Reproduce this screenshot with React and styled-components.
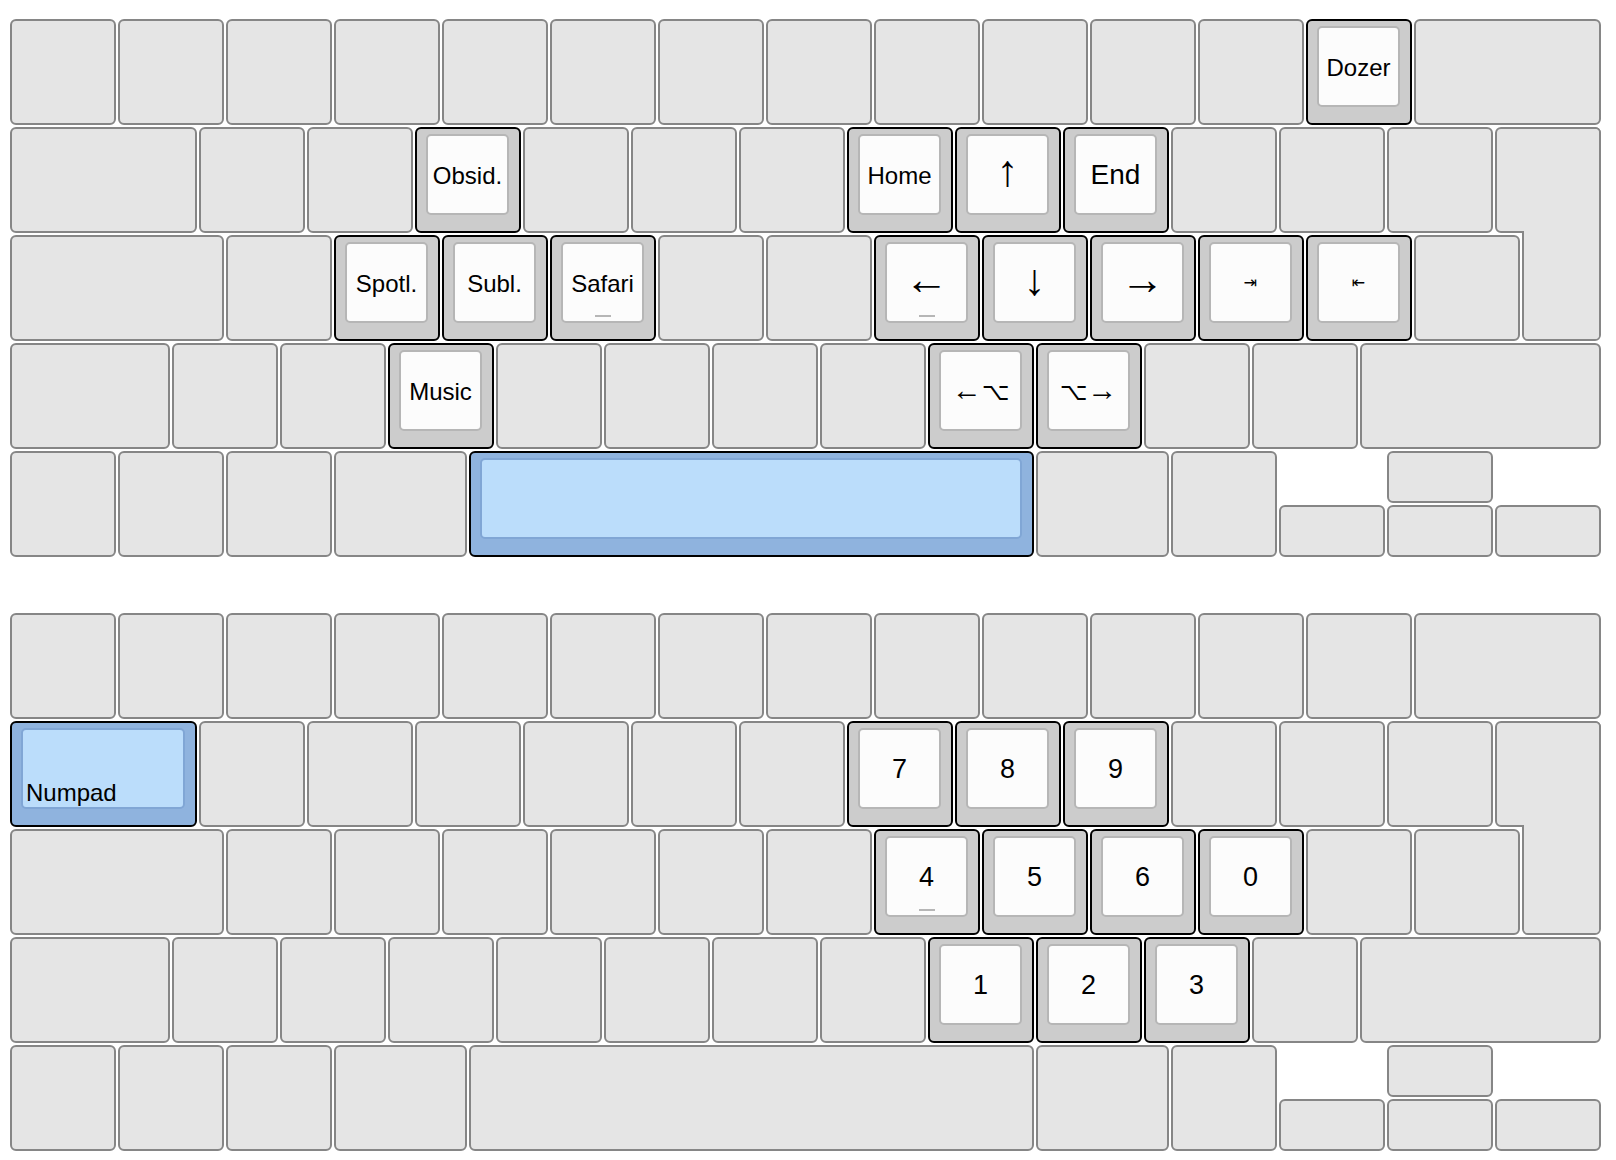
import React from 'react';
import styled, {createGlobalStyle, css} from 'styled-components';

const GlobalStyle = createGlobalStyle`
    html, body {
        margin: 0;
        padding: 0;
        background: #fff;
    }
    body {
        font-family: "Liberation Sans", Arial, "DejaVu Sans", sans-serif;
        color: #000;
    }
`

const Page = styled.div`
    display: flex;
    flex-direction: column;
    gap: 54px;
    padding: 18px 9px 0;
    width: max-content;
`

// 1u = 108px, grid in quarter units across, half units down
const Board = styled.div`
    display: grid;
    grid-template-columns: repeat(59, 27px);
    grid-template-rows: repeat(10, 54px);
`

const KeyCap = styled.div`
    grid-column: ${p => p.$x * 4 + 1} / span ${p => p.$w * 4};
    grid-row: ${p => p.$y * 2 + 1} / span ${p => p.$h * 2};
    margin: 1px;
    box-sizing: border-box;
    border: 2px solid #868686;
    border-radius: 6px;
    background: #e5e5e5;
    display: flex;
    ${p => p.$tone === 'hl' && css`
        border-color: #000;
        background: #cccccc;
        padding: 5px 10px 16px 9px;
    `}
    ${p => p.$tone === 'blue' && css`
        border-color: #000;
        background: #8fb3de;
        padding: 5px 10px 16px 9px;
    `}
`

const KeyTop = styled.div`
    flex: 1;
    display: grid;
    box-sizing: border-box;
    border: 2px solid #b6b6b6;
    border-radius: 5px;
    background: #fcfcfc;
    font-size: ${p => p.$size || 24}px;
    ${p => p.$blue && css`
        background: #bbddfb;
        border-color: #80a6d5;
    `}
`

const Label = styled.span`
    grid-area: 1 / 1;
    white-space: nowrap;
    line-height: 1.15;
    ${p => p.$corner ? css`
        align-self: end;
        justify-self: start;
        padding: 0 3px 0;
    ` : css`
        align-self: center;
        justify-self: center;
        margin-top: 2px;
    `}
    ${p => p.$symbol && css`
        font-family: "DejaVu Sans", sans-serif;
    `}
`

const Arrow = styled.span`
    font-size: ${p => p.$size || 44}px;
    line-height: 0;
    vertical-align: ${p => p.$lift || 0}px;
`

const Nub = styled.span`
    grid-area: 1 / 1;
    align-self: end;
    justify-self: center;
    width: 16px;
    height: 2px;
    margin-bottom: 4px;
    background: #b6b6b6;
`

const EnterWrap = styled.div`
    grid-column: 56 / span 4;
    grid-row: 3 / span 4;
    margin: 1px;
    display: grid;
    grid-template-columns: 27px 1fr;
    grid-template-rows: 106px 1fr;
`

const EnterPart = styled.div`
    grid-area: ${p => p.$area};
    box-sizing: border-box;
    border: 2px solid #868686;
    border-radius: 6px;
    background: #e5e5e5;
`

const EnterFill = styled.div`
    grid-area: 1 / 2 / 3 / 3;
    margin: 2px;
    background: #e5e5e5;
    border-radius: 0 4px 4px 4px;
`

function row(y, specs) {
    let x = 0;
    return specs.map(s => {
        const k = {x, y, w: 1, h: 1, ...s};
        x = k.x + k.w;
        return k;
    });
}

const ones = n => Array.from({length: n}, () => ({}));

const layout = [
    ...row(0, [...ones(13), {w: 1.75}]),
    ...row(1, [{w: 1.75}, ...ones(12)]),
    ...row(2, [{w: 2}, ...ones(12)]),
    ...row(3, [{w: 1.5}, ...ones(11), {w: 2.25}]),
    ...row(4, [{}, {}, {}, {w: 1.25}, {w: 5.25}, {w: 1.25}, {}]),
    {x: 12.75, y: 4, w: 1, h: 0.5},
    {x: 11.75, y: 4.5, w: 1, h: 0.5},
    {x: 12.75, y: 4.5, w: 1, h: 0.5},
    {x: 13.75, y: 4.5, w: 1, h: 0.5},
];

const mainLayer = {
    '12,0': {label: 'Dozer'},
    '3.75,1': {label: 'Obsid.'},
    '7.75,1': {label: 'Home'},
    '8.75,1': {label: <Arrow $size={44} $lift={-2}>↑</Arrow>},
    '9.75,1': {label: 'End', size: 28},
    '3,2': {label: 'Spotl.'},
    '4,2': {label: 'Subl.'},
    '5,2': {label: 'Safari', nub: true},
    '8,2': {label: <Arrow $lift={-2}>←</Arrow>, nub: true},
    '9,2': {label: <Arrow $size={44} $lift={-3}>↓</Arrow>},
    '10,2': {label: <Arrow $lift={-2}>→</Arrow>},
    '11,2': {label: '⇥', size: 16, symbol: true},
    '12,2': {label: '⇤', size: 16, symbol: true},
    '3.5,3': {label: 'Music'},
    '8.5,3': {label: <><Arrow $size={30}>←</Arrow>⌥</>},
    '9.5,3': {label: <>⌥<Arrow $size={30}>→</Arrow></>},
    '4.25,4': {tone: 'blue'},
};

const numLayer = {
    '0,1': {label: 'Numpad', tone: 'blue', corner: true},
    '7.75,1': {label: '7', size: 27},
    '8.75,1': {label: '8', size: 27},
    '9.75,1': {label: '9', size: 27},
    '8,2': {label: '4', size: 27, nub: true},
    '9,2': {label: '5', size: 27},
    '10,2': {label: '6', size: 27},
    '11,2': {label: '0', size: 27},
    '8.5,3': {label: '1', size: 27},
    '9.5,3': {label: '2', size: 27},
    '10.5,3': {label: '3', size: 27},
};

function Key({k, info}) {
    const tone = info ? (info.tone || 'hl') : 'plain';
    return (
        <KeyCap $x={k.x} $y={k.y} $w={k.w} $h={k.h} $tone={tone}>
            {info && (
                <KeyTop $size={info.size} $blue={tone === 'blue'}>
                    {info.label && (
                        <Label $corner={info.corner} $symbol={info.symbol}>{info.label}</Label>
                    )}
                    {info.nub && <Nub/>}
                </KeyTop>
            )}
        </KeyCap>
    );
}

function EnterKey() {
    return (
        <EnterWrap>
            <EnterPart $area="1 / 2 / 3 / 3"/>
            <EnterPart $area="1 / 1 / 2 / 3"/>
            <EnterFill/>
        </EnterWrap>
    );
}

function Keyboard({layer}) {
    return (
        <Board>
            {layout.map(k => (
                <Key key={`${k.x},${k.y}`} k={k} info={layer[`${k.x},${k.y}`]}/>
            ))}
            <EnterKey/>
        </Board>
    );
}

export default function App() {
    return (
        <>
            <GlobalStyle/>
            <Page>
                <Keyboard layer={mainLayer}/>
                <Keyboard layer={numLayer}/>
            </Page>
        </>
    );
}
